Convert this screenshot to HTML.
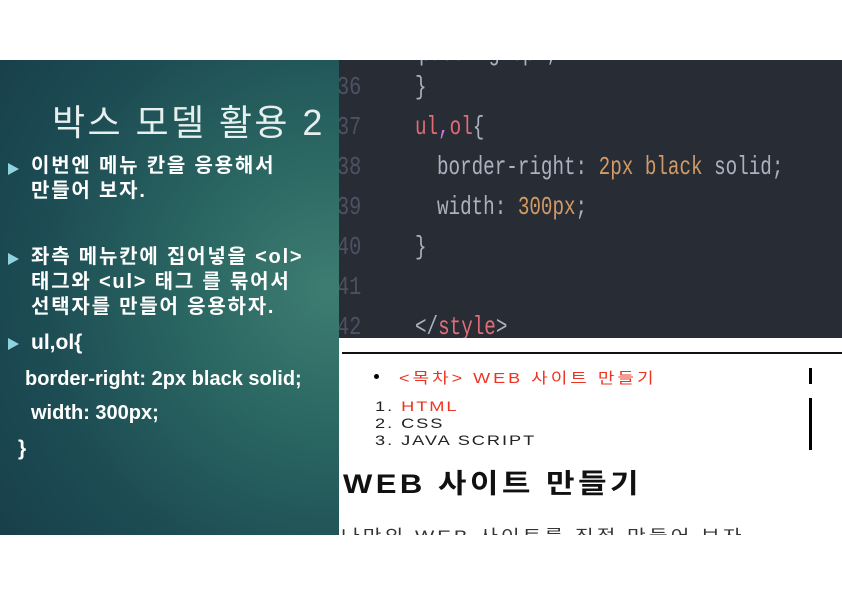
<!DOCTYPE html>
<html><head><meta charset="utf-8"><style>
body{margin:0;width:842px;height:595px;background:#fff;position:relative;overflow:hidden;font-family:"Liberation Sans","Noto Sans CJK KR",sans-serif}
#left{position:absolute;left:0;top:60px;width:339px;height:475px;background:radial-gradient(circle at 330px 230px,#3e7d72 0%,#2a6662 35%,#1d4d54 70%,#183f4a 100%);color:#fff}
.t{position:absolute;left:52px;font-size:36px;color:#e6eeee;white-space:nowrap;letter-spacing:2.4px}
.b{position:absolute;font-size:20px;font-weight:bold;line-height:25px;white-space:nowrap}
.k{letter-spacing:1.8px}
.tri{position:absolute;width:0;height:0;border-left:11px solid #8fd3df;border-top:6px solid transparent;border-bottom:6px solid transparent}
#code{position:absolute;left:339px;top:60px;width:503px;height:278px;background:#282c34;overflow:hidden;font-family:"Liberation Mono",monospace}
.l{position:absolute;font-size:26px;white-space:nowrap;transform:scaleX(.74);transform-origin:left}
.n{position:absolute;left:-2px;font-size:26px;color:#4b5261;transform:scaleX(.78);transform-origin:left}
#bot{position:absolute;left:339px;top:338px;width:503px;height:197px;background:#fff;overflow:hidden}
.s{position:absolute;white-space:nowrap;transform-origin:left}
</style></head><body>
<div id="left">
<div class="t" style="top:34px">박스 모델 활용 2</div>
<div class="tri" style="left:8px;top:103px"></div>
<div class="b k" style="left:31px;top:94px">이번엔 메뉴 칸을 응용해서<br>만들어 보자.</div>
<div class="tri" style="left:8px;top:193px"></div>
<div class="b k" style="left:31px;top:185px">좌측 메뉴칸에 집어넣을 &lt;ol&gt;<br>태그와 &lt;ul&gt; 태그 를 묶어서<br>선택자를 만들어 응용하자.</div>
<div class="tri" style="left:8px;top:278px"></div>
<div class="b" style="left:31px;top:270px;font-size:21px">ul,ol{</div>
<div class="b" style="left:25px;top:307px;font-size:20px">border-right: 2px black solid;</div>
<div class="b" style="left:31px;top:341px;font-size:20px">width: 300px;</div>
<div class="b" style="left:18px;top:376px;font-size:21px">}</div>
</div>
<div id="code">
<div class="l" style="left:80px;top:-22px;color:#abb2bf">padding:0px;</div>
<div class="n" style="top:12px">36</div><div class="l" style="left:76px;top:12px;color:#abb2bf">}</div>
<div class="n" style="top:52px">37</div><div class="l" style="left:76px;top:52px;color:#e06c75">ul<span style="color:#c678dd">,</span>ol<span style="color:#abb2bf">{</span></div>
<div class="n" style="top:92px">38</div><div class="l" style="left:98px;top:92px;color:#abb2bf">border-right: <span style="color:#d19a66">2px black</span> solid;</div>
<div class="n" style="top:132px">39</div><div class="l" style="left:98px;top:132px;color:#abb2bf">width: <span style="color:#d19a66">300px</span>;</div>
<div class="n" style="top:172px">40</div><div class="l" style="left:76px;top:172px;color:#abb2bf">}</div>
<div class="n" style="top:212px">41</div>
<div class="n" style="top:252px">42</div><div class="l" style="left:76px;top:252px;color:#abb2bf">&lt;/<span style="color:#e06c75">style</span>&gt;</div>
</div>
<div id="bot">
<div style="position:absolute;left:3px;top:14px;width:500px;height:2px;background:#111"></div>
<div style="position:absolute;left:35px;top:36px;width:5px;height:5px;border-radius:50%;background:#000"></div>
<div class="s" style="left:60px;top:29px;font-size:15px;color:#e32;letter-spacing:2.5px;transform:scaleX(1.2)">&lt;목차&gt; WEB 사이트 만들기</div>
<div style="position:absolute;left:470px;top:30px;width:3px;height:16px;background:#000"></div>
<div style="position:absolute;left:470px;top:60px;width:3px;height:52px;background:#000"></div>
<div class="s" style="left:36px;top:60px;font-size:14px;line-height:17px;color:#222;letter-spacing:1.5px;transform:scaleX(1.3)">1. <span style="color:#e32">HTML</span><br>2. CSS<br>3. JAVA SCRIPT</div>
<div class="s" style="left:4px;top:124px;font-size:27px;font-weight:bold;color:#111;letter-spacing:3px;transform:scaleX(1.15)">WEB 사이트 만들기</div>
<div class="s" style="left:2px;top:184px;font-size:17px;color:#333;letter-spacing:2.5px;transform:scaleX(1.2)">나만의 WEB 사이트를 직접 만들어 보자</div>
</div>
</body></html>
